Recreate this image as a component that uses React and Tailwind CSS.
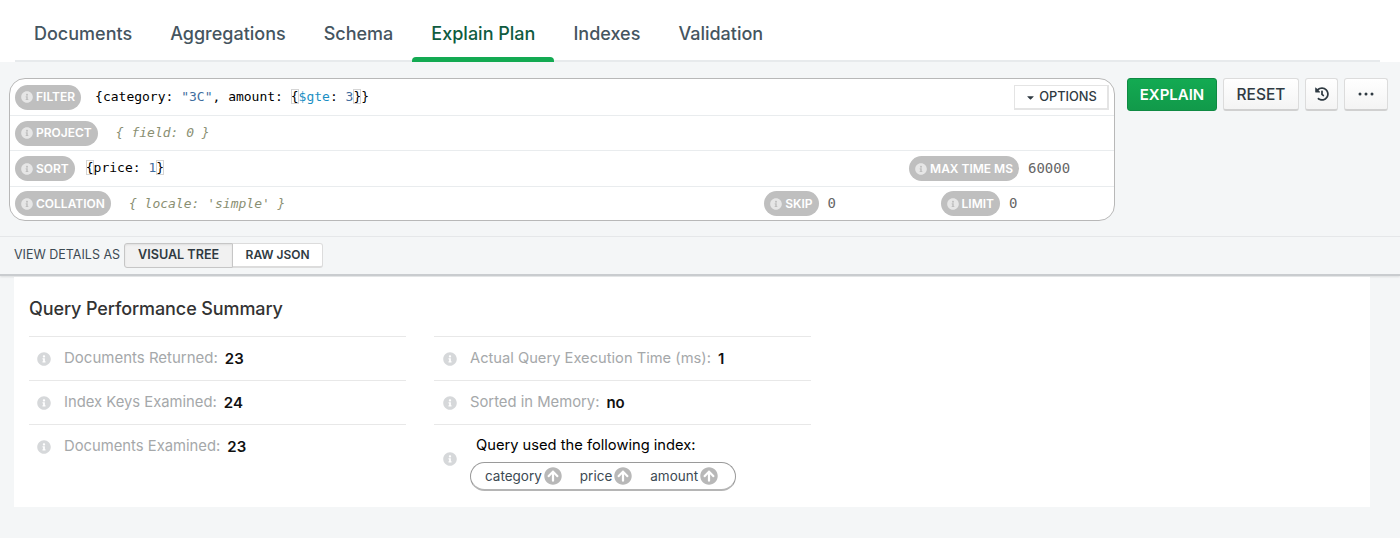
import React from "react";
import { FaInfoCircle, FaArrowCircleUp, FaHistory, FaCaretDown } from "react-icons/fa";

const sans = "font-['Inter','Liberation_Sans',sans-serif]";
const mono = "font-['DejaVu_Sans_Mono','Liberation_Mono',monospace]";

function Tab({ label, active }) {
  return (
    <div className={`relative h-full px-[19px] pt-[22px] text-[18px] leading-[24px] font-medium ${active ? "text-[#0f5c3f]" : "text-[#45555f]"}`}>
      {label}
      {active && <div className="absolute bottom-[-2px] left-0 right-0 h-[5px] rounded-t-[4px] bg-[#13aa52]" />}
    </div>
  );
}

function Pill({ label }) {
  return (
    <div className="flex h-[25px] shrink-0 items-center gap-[3px] rounded-full bg-[#bfbfbf] pl-[6px] pr-[6px] text-[12px] font-semibold text-white">
      <FaInfoCircle className="text-[#e6e6e6]" size={12} />
      <span>{label}</span>
    </div>
  );
}

function Row({ children, h, last }) {
  return <div className={`flex items-center pl-[5px] ${h} ${last ? "" : "border-b border-[#e9ecee]"}`}>{children}</div>;
}

function Btn({ children, className = "" }) {
  return (
    <div className={`flex h-[33px] items-center justify-center rounded-[3px] border border-[#dcdcdc] border-b-2 border-b-[#d0d0d0] bg-gradient-to-b from-white to-[#f4f4f4] text-[#2f3a42] ${className}`}>
      {children}
    </div>
  );
}

function Match({ children }) {
  return <span className="outline outline-1 -outline-offset-1 outline-[#d5d5d5]">{children}</span>;
}

function Stat({ label, value, pad, size = "text-[14.8px]" }) {
  return (
    <div className={`flex h-[44px] items-center border-t border-[#e8e8e8] ${size} ${pad}`}>
      <FaInfoCircle className="mr-[13px] text-[#d6d8da]" size={14} />
      <span className="text-[#a5a8aa]">{label}</span>
      <span className="ml-[7px] mt-[2px] text-[15px] font-semibold text-[#111]">{value}</span>
    </div>
  );
}

function IndexField({ name }) {
  return (
    <div className="flex items-center gap-[2px]">
      <span>{name}</span>
      <FaArrowCircleUp className="text-[#b8b8b8]" size={18} />
    </div>
  );
}

export default function App() {
  return (
    <div className={`${sans} h-[538px] w-[1400px] overflow-hidden bg-[#f4f6f7]`}>
      <div className="h-[62px] bg-white">
        <div className="ml-[15px] mr-[20px] flex h-[62px] border-b-2 border-[#e7eaec]">
          <Tab label="Documents" />
          <Tab label="Aggregations" />
          <Tab label="Schema" />
          <Tab label="Explain Plan" active />
          <Tab label="Indexes" />
          <Tab label="Validation" />
        </div>
      </div>

      <div className="flex h-[175px] items-start border-b border-[#e6e8ea] pl-[9px] pt-[16px]">
        <div className="h-[143px] w-[1106px] overflow-hidden rounded-[16px] border border-[#b8b8b8] bg-white">
          <Row h="h-[37px]">
            <Pill label="FILTER" />
            <div className={`${mono} ml-[14px] text-[13px] text-black`}>
              {"{category: "}<span className="text-[#3f6d9e]">"3C"</span>{", amount: "}<Match>{"{"}</Match><span className="text-[#1a8fc4]">$gte</span>{": "}<span className="text-[#3f6d9e]">3</span><Match>{"}"}</Match>{"}"}
            </div>
            <div className="ml-auto mr-[5px] flex h-[25px] w-[95px] items-center justify-center gap-[3px] border-2 border-t border-l border-[#e4e4e4] bg-white pt-[1px] text-[12.8px] font-medium text-[#2f3a42]">
              <FaCaretDown size={11} />
              <span>OPTIONS</span>
            </div>
          </Row>
          <Row h="h-[35px]">
            <Pill label="PROJECT" />
            <div className={`${mono} ml-[18px] text-[13px] italic text-[#8a8f72]`}>{"{ field: 0 }"}</div>
          </Row>
          <Row h="h-[36px]">
            <Pill label="SORT" />
            <div className={`${mono} ml-[11px] -mt-[1px] text-[13px] text-black`}>
              <Match>{"{"}</Match>{"price: "}<span className="text-[#3f6d9e]">1</span><Match>{"}"}</Match>
            </div>
            <div className="ml-auto flex items-center">
              <Pill label="MAX TIME MS" />
              <div className={`${mono} ml-[9px] -mt-[1px] w-[86px] text-[14px] text-[#666]`}>60000</div>
            </div>
          </Row>
          <Row h="h-[33px]" last>
            <Pill label="COLLATION" />
            <div className={`${mono} ml-[18px] text-[13px] italic text-[#8a8f72]`}>{"{ locale: 'simple' }"}</div>
            <div className="ml-auto flex items-center">
              <Pill label="SKIP" />
              <div className={`${mono} ml-[9px] w-[113px] text-[14px] text-[#666]`}>0</div>
              <Pill label="LIMIT" />
              <div className={`${mono} ml-[9px] w-[105px] text-[14px] text-[#666]`}>0</div>
            </div>
          </Row>
        </div>
        <div className="ml-[12px] flex items-start gap-[6px]">
          <div className="flex h-[33px] w-[90px] items-center justify-center rounded-[3px] border border-[#0f8a43] bg-gradient-to-b from-[#13aa52] to-[#119a4a] pt-[2px] text-[15px] font-semibold text-white">EXPLAIN</div>
          <Btn className="w-[76px] pt-[2px] text-[15.5px] font-medium">RESET</Btn>
          <Btn className="w-[33px]"><FaHistory size={14} /></Btn>
          <Btn className="w-[44px]">
            <svg width="16" height="4" viewBox="0 0 16 4" fill="currentColor">
              <circle cx="2" cy="2" r="1.5" />
              <circle cx="8" cy="2" r="1.5" />
              <circle cx="14" cy="2" r="1.5" />
            </svg>
          </Btn>
        </div>
      </div>

      <div className="flex h-[39px] items-center border-b-2 border-[#c9cccf] pl-[14px] shadow-[0_1px_2px_rgba(0,0,0,0.1)]">
        <span className="mr-[4px] text-[12.5px] text-[#3d4a53]">VIEW DETAILS AS</span>
        <div className="flex h-[25px] w-[109px] items-center justify-center rounded-l-[3px] border border-[#c6c6c6] bg-[#f1f1f1] text-[12.6px] font-semibold text-[#2f3a42] shadow-[inset_0_1px_2px_rgba(0,0,0,0.08)]">VISUAL TREE</div>
        <div className="flex h-[25px] w-[90px] items-center justify-center rounded-r-[3px] border border-l-0 border-[#dcdcdc] border-b-2 bg-white text-[12px] font-semibold text-[#2f3a42]">RAW JSON</div>
      </div>

      <div className="ml-[14px] mt-[1px] h-[230px] w-[1356px] bg-white pl-[15px] pt-[21px]">
        <div className="h-[38px] text-[18px] font-medium leading-[22px] tracking-[-0.1px] text-[#333]">Query Performance Summary</div>
        <div className="flex gap-[28px]">
          <div className="w-[377px]">
            <Stat pad="pl-[8px]" size="text-[15px]" label="Documents Returned:" value="23" />
            <Stat pad="pl-[8px]" label="Index Keys Examined:" value="24" />
            <Stat pad="pl-[8px]" label="Documents Examined:" value="23" />
          </div>
          <div className="w-[377px]">
            <Stat pad="pl-[9px]" size="text-[14.7px]" label="Actual Query Execution Time (ms):" value="1" />
            <Stat pad="pl-[9px]" label="Sorted in Memory:" value="no" />
            <div className="flex h-[68px] items-start border-t border-[#e8e8e8] pl-[9px]">
              <FaInfoCircle className="mr-[13px] mt-[27px] text-[#d6d8da]" size={14} />
              <div className="pt-[10px]">
                <div className="ml-[6px] text-[14.7px] leading-[20px] text-black">Query used the following index:</div>
                <div className="mt-[7px] flex h-[29px] w-[266px] items-center gap-[18px] rounded-full border border-[#9a9a9a] border-b-2 border-b-[#b5b5b5] pl-[14px] text-[13.5px] text-[#3d4a53]">
                  <IndexField name="category" />
                  <IndexField name="price" />
                  <IndexField name="amount" />
                </div>
              </div>
            </div>
          </div>
        </div>
      </div>
    </div>
  );
}
